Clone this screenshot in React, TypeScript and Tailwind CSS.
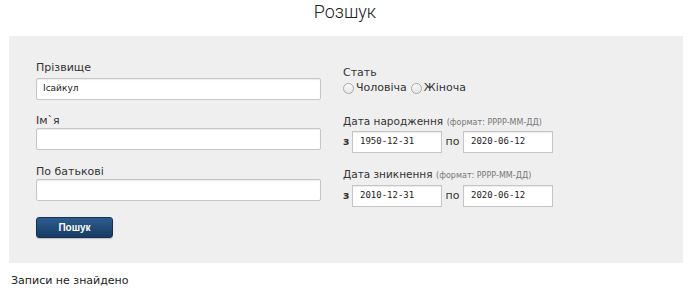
export default function App() {
  const font = { fontFamily: '"DejaVu Sans", Verdana, sans-serif' };

  const Radio = ({ label }: { label: string }) => (
    <label className="flex items-center">
      <span className="mr-[2px] h-[11px] w-[11px] rounded-full border border-[#a9a9a9] bg-gradient-to-b from-[#fafafa] to-[#e6e6e6]" />
      <span>{label}</span>
    </label>
  );

  const DateRow = ({ from, to }: { from: string; to: string }) => (
    <div className="flex items-center">
      <span className="w-[9px] text-[11px] font-bold text-[#333]">з</span>
      <div className="flex h-[22px] w-[90px] items-center border border-[#c6c6c6] bg-white pl-[7px] font-['DejaVu_Sans_Mono',monospace] text-[9px] text-[#222] shadow-[inset_0_1px_1px_rgba(0,0,0,0.08)]">
        {from}
      </div>
      <span className="w-[21px] text-center text-[11px] text-[#333]">по</span>
      <div className="flex h-[22px] w-[90px] items-center border border-[#c6c6c6] bg-white pl-[7px] font-['DejaVu_Sans_Mono',monospace] text-[9px] text-[#222] shadow-[inset_0_1px_1px_rgba(0,0,0,0.08)]">
        {to}
      </div>
    </div>
  );

  const inputCls =
    "flex h-[22px] w-[285px] items-center rounded-[2px] border border-[#c6c6c6] bg-white pl-[6px] text-[9px] text-[#222] shadow-[inset_0_1px_1px_rgba(0,0,0,0.08)]";

  return (
    <div className="h-[298px] w-[690px] bg-white text-[#333]" style={font}>
      <h1 className="h-[36px] text-center font-['Roboto',sans-serif] text-[18px] font-light leading-[24px] text-[#222]">
        Розшук
      </h1>
      <div className="ml-[9px] flex w-[674px] gap-[22px] bg-[#efefef] pb-[25px] pl-[27px] pt-[25px]">
        <div className="flex w-[285px] flex-col text-[11px]">
          <div className="leading-[14px]">Прізвище</div>
          <div className={`mt-[3px] ${inputCls}`}>Ісайкул</div>
          <div className="mt-[14px] leading-[14px]">Ім`я</div>
          <div className={inputCls} />
          <div className="mt-[15px] leading-[14px]">По батькові</div>
          <div className={inputCls} />
          <button className="mt-[16px] h-[21px] w-[77px] rounded-[3px] border border-[#123355] bg-gradient-to-b from-[#2d5d8e] to-[#173c63] font-['Liberation_Sans',Arial,sans-serif] text-[10px] font-bold text-white shadow-[0_1px_1px_rgba(0,0,0,0.2)]">
            Пошук
          </button>
        </div>
        <div className="flex flex-col text-[11px]">
          <div className="mt-[5px] leading-[14px]">Стать</div>
          <div className="mt-[1px] flex items-center gap-[4px] leading-[14px]">
            <Radio label="Чоловіча" />
            <Radio label="Жіноча" />
          </div>
          <div className="mt-[19px] leading-[14px]">
            <span className="text-[10.5px]">Дата народження</span>{" "}
            <span className="text-[8px] text-[#777]">(формат: РРРР-ММ-ДД)</span>
          </div>
          <div className="mt-[1px]">
            <DateRow from="1950-12-31" to="2020-06-12" />
          </div>
          <div className="mt-[14px] leading-[14px]">
            <span className="text-[10.5px]">Дата зникнення</span>{" "}
            <span className="text-[8px] text-[#777]">(формат: РРРР-ММ-ДД)</span>
          </div>
          <div className="mt-[2px]">
            <DateRow from="2010-12-31" to="2020-06-12" />
          </div>
        </div>
      </div>
      <div className="ml-[11px] mt-[11px] text-[11px] leading-[14px] text-[#222]">Записи не знайдено</div>
    </div>
  );
}
